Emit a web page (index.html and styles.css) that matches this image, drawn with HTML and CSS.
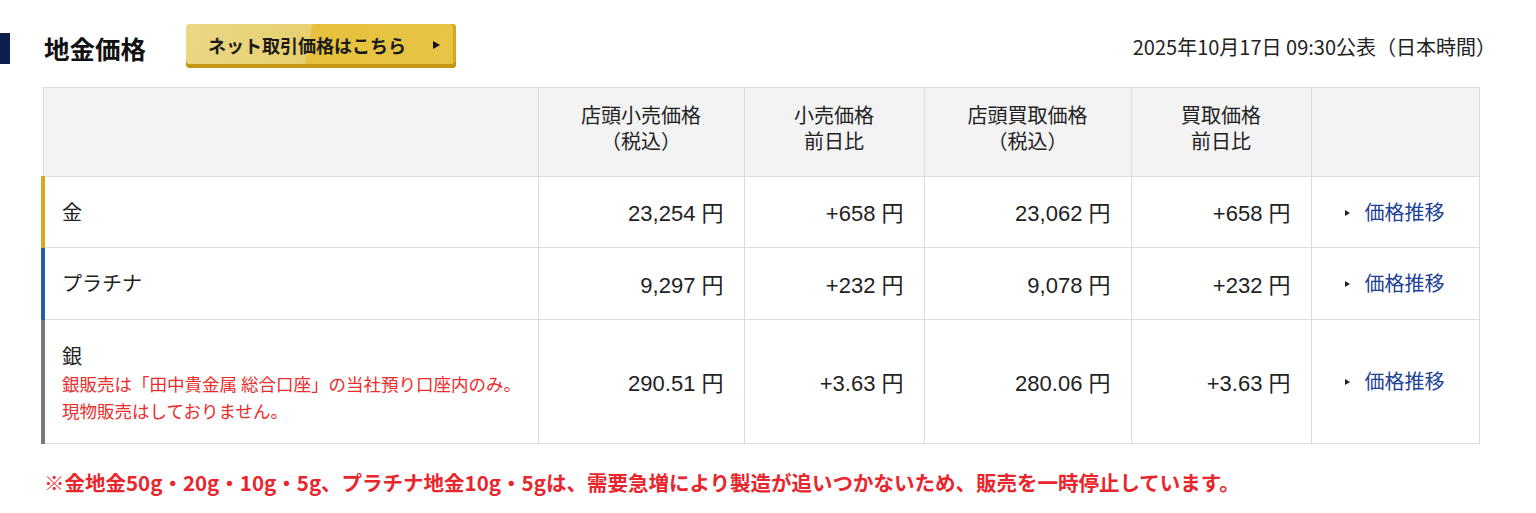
FILE: index.html
```html
<!DOCTYPE html>
<html lang="ja">
<head>
<meta charset="utf-8">
<link rel="stylesheet" href="styles.css">
</head>
<body>
<div class="page">
  <div class="head">
    <div class="head-left">
      <span class="bar"></span>
      <h2 class="title">地金価格</h2>
      <a class="netbtn"><span>ネット取引価格はこちら</span><span class="tri"></span></a>
    </div>
    <div class="date">2025年10月17日 09:30公表（日本時間）</div>
  </div>
  <table class="prices">
    <colgroup>
      <col style="width:495px"><col style="width:206px"><col style="width:180px"><col style="width:207px"><col style="width:180px"><col style="width:168px">
    </colgroup>
    <thead>
      <tr>
        <th></th>
        <th>店頭小売価格<br>（税込）</th>
        <th>小売価格<br>前日比</th>
        <th>店頭買取価格<br>（税込）</th>
        <th>買取価格<br>前日比</th>
        <th></th>
      </tr>
    </thead>
    <tbody>
      <tr class="r1">
        <td class="name gold">金</td>
        <td class="num">23,254 円</td>
        <td class="num">+658 円</td>
        <td class="num">23,062 円</td>
        <td class="num">+658 円</td>
        <td class="link"><span class="ltri"></span>価格推移</td>
      </tr>
      <tr class="r2">
        <td class="name plat">プラチナ</td>
        <td class="num">9,297 円</td>
        <td class="num">+232 円</td>
        <td class="num">9,078 円</td>
        <td class="num">+232 円</td>
        <td class="link"><span class="ltri"></span>価格推移</td>
      </tr>
      <tr class="r3">
        <td class="name silver">銀<p class="note">銀販売は「田中貴金属 総合口座」の当社預り口座内のみ。<br>現物販売はしておりません。</p></td>
        <td class="num">290.51 円</td>
        <td class="num">+3.63 円</td>
        <td class="num">280.06 円</td>
        <td class="num">+3.63 円</td>
        <td class="link"><span class="ltri"></span>価格推移</td>
      </tr>
    </tbody>
  </table>
  <p class="stop">※金地金50g・20g・10g・5g、プラチナ地金10g・5gは、需要急増により製造が追いつかないため、販売を一時停止しています。</p>
</div>
</body>
</html>
```

FILE: styles.css
```css
* { box-sizing: border-box; }
html, body { margin: 0; padding: 0; background: #fff; }
body {
  font-family: "Noto Sans CJK JP", "Noto Sans", sans-serif;
  color: #222;
}
.page { padding: 24px 40px 0 0; }
.head {
  display: flex;
  justify-content: space-between;
  align-items: center;
  height: 44px;
}
.head-left { display: flex; align-items: center; }
.bar {
  display: block;
  width: 10px;
  height: 31px;
  background: #0d1d4c;
  margin-top: 5px;
}
.title {
  margin: 4px 0 0 34px;
  font-size: 25.5px;
  font-weight: 700;
  color: #111;
  line-height: 1;
}
.netbtn {
  display: flex;
  align-items: center;
  justify-content: space-between;
  margin-left: 40px;
  width: 270px;
  height: 44px;
  padding: 0 14px 3px 22px;
  border-radius: 4px;
  background: linear-gradient(100deg, #ead785 0%, #e8d070 45%, #e6c13c 46%, #e8c547 100%);
  box-shadow: inset 0 -4px 0 #c39613, inset -3px 0 0 #d4a622;
  font-size: 18px;
  font-weight: 700;
  color: #1a1a1a;
}
.tri {
  width: 0; height: 0;
  border-left: 7px solid #111;
  border-top: 4.5px solid transparent;
  border-bottom: 4.5px solid transparent;
  margin-right: 2px;
}
.date {
  font-size: 20px;
  color: #222;
}
.prices {
  margin: 19px 0 0 41px;
  width: 1436px;
  border-collapse: collapse;
  table-layout: fixed;
  font-size: 20px;
}
.prices th, .prices td {
  border: 1.5px solid #dcdcdc;
}
.prices th {
  background: #f3f3f3;
  font-weight: 400;
  height: 89px;
  line-height: 26px;
  color: #222;
  padding: 0 0 8px;
  text-align: center;
}
.prices td { background: #fff; color: #222; }
.r1 td { height: 71px; }
.r2 td { height: 72px; }
.r3 td { height: 124px; }
.name {
  padding: 0 0 2px 17px;
  vertical-align: middle;
}
.name.gold { border-left: 4px solid #d6ab19 !important; }
.name.plat { border-left: 4px solid #2b5ba7 !important; }
.name.silver { border-left: 4px solid #7a7a7a !important; padding-top: 4px; line-height: 28px; }
.note {
  margin: 0;
  font-size: 17.5px;
  line-height: 27px;
  color: #ec2b2b;
}
.num {
  text-align: right;
  padding: 0 20px 2px 0;
  font-family: "Liberation Sans", "Noto Sans CJK JP", sans-serif;
  font-size: 22px;
}
.prices td.link {
  padding: 0 0 2px 33px;
  color: #1d4196;
  font-size: 20px;
}
.ltri {
  display: inline-block;
  width: 0; height: 0;
  border-left: 5px solid #222;
  border-top: 3.5px solid transparent;
  border-bottom: 3.5px solid transparent;
  margin-right: 15px;
  vertical-align: 4px;
}
.stop {
  margin: 24px 0 0 44px;
  font-size: 20.5px;
  font-weight: 700;
  color: #e8262d;
  line-height: 28px;
}
```
